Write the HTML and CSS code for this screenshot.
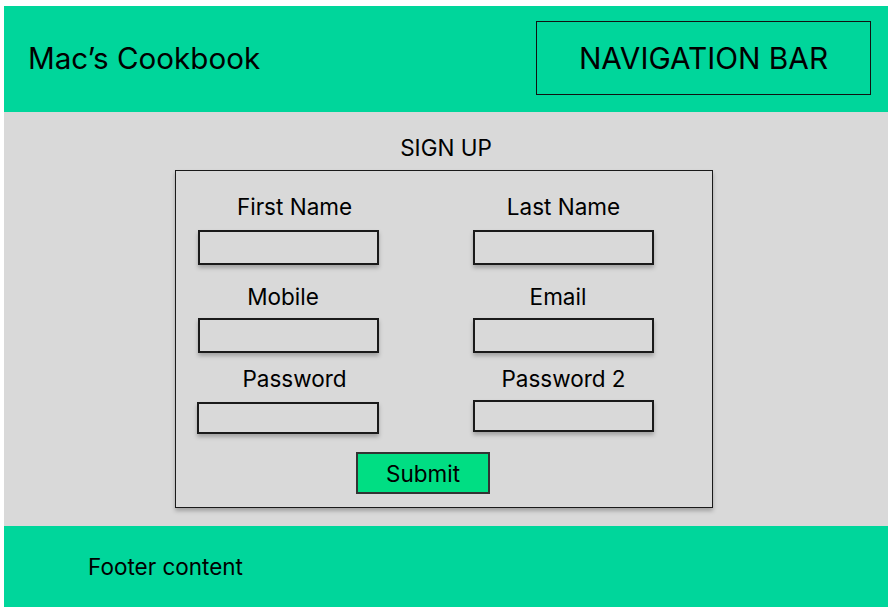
FILE: index.html
```html
<!DOCTYPE html>
<html>
<head>
<meta charset="utf-8">
<link rel="stylesheet" href="styles.css">
</head>
<body>
<div class="page">
  <header class="header">
    <div class="brand">Mac’s Cookbook</div>
    <nav class="nav">NAVIGATION BAR</nav>
  </header>
  <main class="main">
    <h1 class="title">SIGN UP</h1>
    <form class="form">
      <div class="grid">
        <div class="field"><label class="label l1">First Name</label><input class="input" type="text"></div>
        <div class="field"><label class="label">Last Name</label><input class="input" type="text"></div>
        <div class="field row2"><label class="label l2">Mobile</label><input class="input" type="text"></div>
        <div class="field row2"><label class="label l2">Email</label><input class="input" type="text"></div>
        <div class="field row3"><label class="label l1">Password</label><input class="input short low" type="password"></div>
        <div class="field row3"><label class="label">Password 2</label><input class="input short" type="password"></div>
      </div>
      <div class="actions"><button class="submit" type="button">Submit</button></div>
    </form>
  </main>
  <footer class="footer">Footer content</footer>
</div>
</body>
</html>
```

FILE: styles.css
```css
* { box-sizing: border-box; }
html, body { margin: 0; padding: 0; background: #ffffff; }
body { font-family: Inter, "Noto Sans", sans-serif; color: #000; }
.page { padding: 6px 0 0 4px; width: 888px; }
.header {
  height: 106px;
  background: #00d69b;
  display: flex;
  align-items: center;
  justify-content: space-between;
  padding: 0 17px 0 24px;
}
.brand { font-size: 29.6px; line-height: 36px; margin-top: -2px; }
.nav {
  width: 335px;
  height: 74px;
  border: 1.5px solid #111;
  display: flex;
  align-items: center;
  justify-content: center;
  font-size: 29.8px;
  margin-top: -2px;
}
.main {
  height: 414px;
  background: #d9d9d9;
  padding-top: 24px;
  display: flex;
  flex-direction: column;
  align-items: center;
}
.title { font-size: 22.5px; font-weight: 400; margin: 0 0 10px 0; line-height: 24px; }
.form {
  width: 538px;
  height: 338px;
  margin-left: -4px;
  border: 1.5px solid #1a1a1a;
  box-shadow: 0 3px 4px rgba(0,0,0,0.25);
  padding: 24px 0 0 22px;
}
.grid {
  display: grid;
  grid-template-columns: 181px 181px;
  column-gap: 94px;
}
.field { display: flex; flex-direction: column; align-items: center; }
.label { font-size: 22.5px; line-height: 24px; margin-bottom: 11px; }
.l1 { margin-left: 12px; }
.l2 { margin-left: -11px; }
.row2 { margin-top: 20px; }
.row2 .label { margin-bottom: 9px; }
.row3 { margin-top: 14px; }
.row3 .label { margin-bottom: 9px; }
.input {
  width: 181px;
  height: 35px;
  background: #d9d9d9;
  border: 2px solid #1a1a1a;
  box-shadow: 0 3px 4px rgba(0,0,0,0.25);
  margin: 0;
  padding: 0;
}
.input.short { height: 32px; }
.input.low { margin-top: 2px; width: 182px; margin-left: -2px; }
.actions { display: flex; justify-content: center; margin-top: 18px; margin-left: -64px; }
.submit {
  width: 134px;
  height: 42px;
  background: #00de83;
  border: 2px solid #333;
  font-family: Inter, "Noto Sans", sans-serif;
  font-size: 22.5px;
  color: #000;
  padding: 0;
}
.footer {
  height: 81px;
  background: #00d69b;
  display: flex;
  align-items: center;
  padding-left: 84px;
  font-size: 22.5px;
}
```
